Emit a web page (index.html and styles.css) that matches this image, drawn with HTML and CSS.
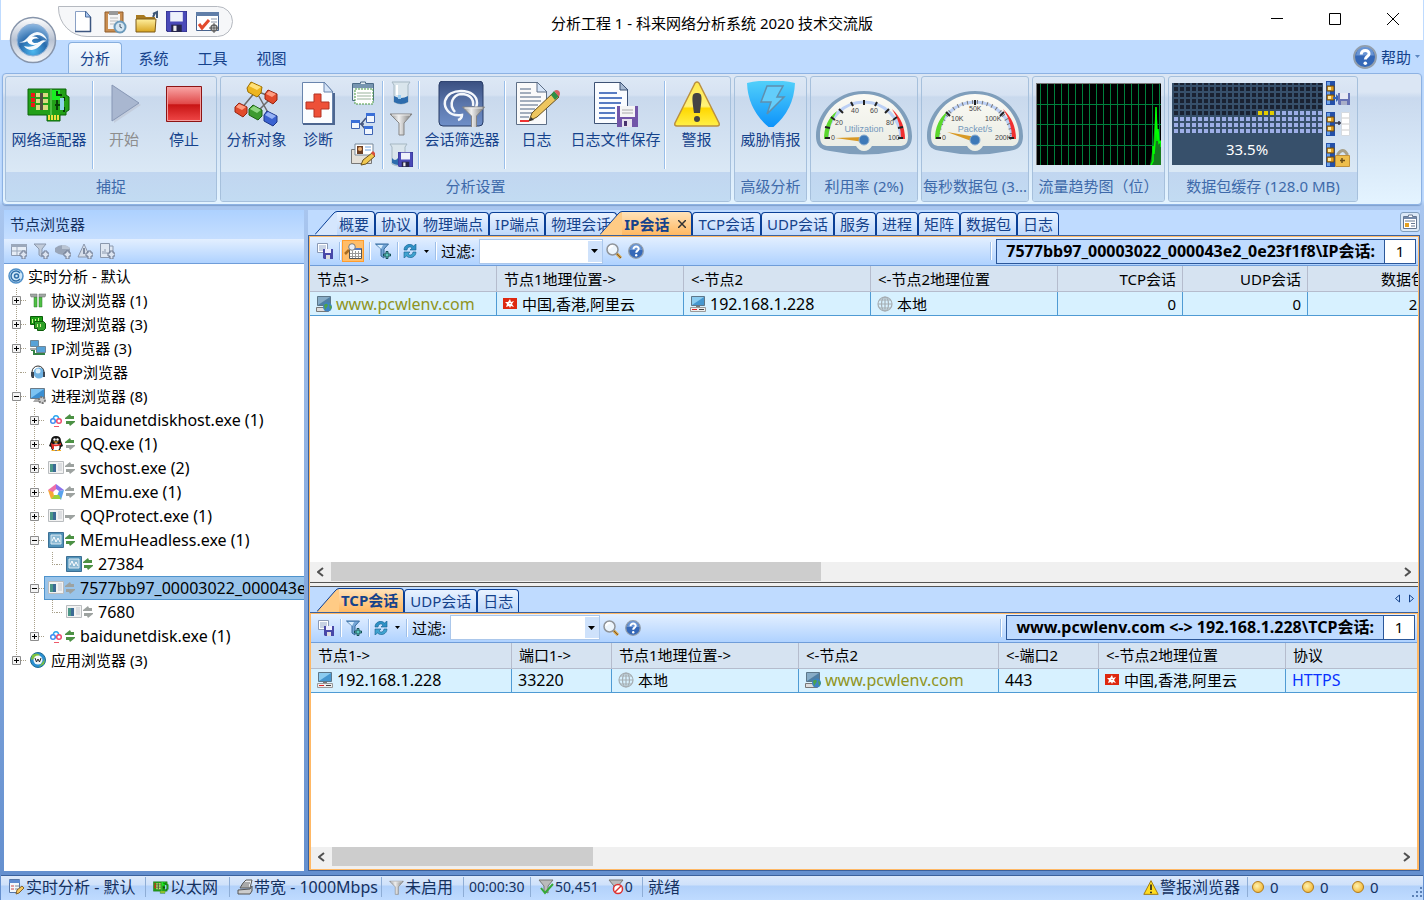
FILE: index.html
```html
<!DOCTYPE html>
<html lang="zh-CN">
<head>
    <meta charset="UTF-8">
    <meta name="viewport" content="width=device-width, initial-scale=1.0">
    <title>分析工程 1 - 科来网络分析系统 2020 技术交流版</title>
    <link rel="stylesheet" href="styles.css">
</head>
<body>
    <!-- shared icons -->
    <svg class="defs" width="0" height="0" aria-hidden="true">
        <defs>
            <linearGradient id="gOrb" x1="0" y1="0" x2="0" y2="1"><stop offset="0" stop-color="#fff"/><stop offset=".5" stop-color="#b9c3d3"/><stop offset="1" stop-color="#f4f7fb"/></linearGradient>
            <radialGradient id="gBlue" cx=".5" cy=".85" r=".85"><stop offset="0" stop-color="#4db8f0"/><stop offset=".5" stop-color="#2a6cad"/><stop offset="1" stop-color="#8fb9e2"/></radialGradient>
            <linearGradient id="gRed" x1="0" y1="0" x2="0" y2="1"><stop offset="0" stop-color="#f9a7a7"/><stop offset=".5" stop-color="#e04848"/><stop offset=".52" stop-color="#c81414"/><stop offset="1" stop-color="#f04848"/></linearGradient>
            <linearGradient id="gYellow" x1="0" y1="0" x2="0" y2="1"><stop offset="0" stop-color="#ffe94a"/><stop offset=".55" stop-color="#fff27a"/><stop offset=".6" stop-color="#ffd800"/><stop offset="1" stop-color="#fff04a"/></linearGradient>
            <linearGradient id="gShield" x1="0" y1="0" x2="0" y2="1"><stop offset="0" stop-color="#52d0fa"/><stop offset="1" stop-color="#0a90fa"/></linearGradient>
            <linearGradient id="gNavy" x1="0" y1="0" x2="0" y2="1"><stop offset="0" stop-color="#394f80"/><stop offset=".5" stop-color="#5a75aa"/><stop offset="1" stop-color="#6f8fc8"/></linearGradient>
            <linearGradient id="gMetal"><stop offset="0" stop-color="#8a8a8a"/><stop offset=".4" stop-color="#f0f0f0"/><stop offset="1" stop-color="#777"/></linearGradient>
            <linearGradient id="gFolder" x1="0" y1="0" x2="0" y2="1"><stop offset="0" stop-color="#fff0a0"/><stop offset="1" stop-color="#d9a520"/></linearGradient>
            <linearGradient id="gFace" x1="0" y1="0" x2="0" y2="1"><stop offset="0" stop-color="#fbfaf4"/><stop offset="1" stop-color="#e9ece4"/></linearGradient>

            <symbol id="floppy" viewBox="0 0 20 20"><path d="M0 0h20v20H2l-2-2z" fill="#4a4ab8" stroke="#2c2c80"/><path d="M4 1h12v9H4z" fill="#eef2fb"/><path d="M5 13h10v7H5z" fill="#26264c"/><path d="M7 14h3v5H7z" fill="#eee"/></symbol>
            <symbol id="floppy-soft" viewBox="0 0 12 12"><path d="M0 0h12v12H1l-1-1z" fill="#6672b4"/><path d="M2 0h8v6H2z" fill="#e6e9f4"/><path d="M3 8h6v4H3z" fill="#a9afc8"/></symbol>
            <symbol id="funnel" viewBox="0 0 24 24"><path d="M1 2h22l-8 9v12h-5V11z" fill="url(#gMetal)" stroke="#858585"/><path d="M3 3h18" stroke="#eee"/></symbol>
            <symbol id="chip" viewBox="0 0 44 34"><path d="M1 1h38v6l3 2v13l-3 2v3h-6v6H20v-6H1z" fill="#22a018" stroke="#0b6408"/><path d="M25 2h8v10h-8z" fill="#19ee22"/><path d="M4 5h4v4H4zM4 10h4v4H4zM4 15h4v4H4z" fill="#f01818"/><path d="M9 5h12v4H9zM9 11h12v4H9zM9 17h12v5H9z" fill="#d8dc80"/><path d="M13 5h3v17h-3z" fill="#505040"/><path d="M24 1v26" stroke="#7be070"/><path d="M30 3v4h5M28 17h8M30 12v10M37 9v4M37 19v5" stroke="#073f07" stroke-width="2" fill="none"/><path d="M33 10h4v12h-4z" fill="#8ed3e8"/><path d="M22 27v5M25 27v5M28 27v5M31 27v5" stroke="#f0e040" stroke-width="2"/></symbol>
            <symbol id="table-save" viewBox="0 0 16 16"><path d="M.5.5h10v9H.5z" fill="#fff" stroke="#8a99b5"/><path d="M2 3h7M2 5h7M2 7h4" stroke="#91a6c8"/><path d="M6 6h10v10H7l-1-1z" fill="#4848a8"/><path d="M8 6h6v4H8z" fill="#eef"/><path d="M9 12h4v4H9z" fill="#ddd"/></symbol>
            <symbol id="funnel-add" viewBox="0 0 16 16"><path d="M.5 1h13L9 6v9l-3-2V6z" fill="#75a5d5" stroke="#346b9e"/><path d="M2 2h6L6 6z" fill="#d8eeff"/><path d="M11 8.500h2v2.500h2.500v2H13v2.500h-2V13H8.500v-2H11z" fill="#5fc9c0" stroke="#154e55"/></symbol>
            <symbol id="refresh" viewBox="0 0 14 14"><path d="M1 6c0-5 6-7.500 9.500-4L13 0v6H7l2-2C7 2 4.500 3 4 6z" fill="#2f92c6" stroke="#16608d" stroke-width=".6"/><path d="M13 8c0 5-6 7.500-9.500 4L1 14V8h6l-2 2c2 2 4.500 1 5-2z" fill="#3fa3d0" stroke="#16608d" stroke-width=".6"/></symbol>
            <symbol id="search" viewBox="0 0 16 16"><path d="M10 10l5 5" stroke="#d5a040" stroke-width="3"/><path d="M10 10l5 5" stroke="#80592a"/><circle cx="6.500" cy="6.500" r="5.500" fill="#edf5fc" stroke="#909499" stroke-width="1.500"/><path d="M3 6a4 4 0 0 1 4-3" stroke="#fff" fill="none" stroke-width="2"/></symbol>
            <symbol id="help" viewBox="0 0 16 16"><circle cx="8" cy="8" r="7.300" fill="#3568b8" stroke="#929eac" stroke-width="1.300"/><path d="M2 7a6 6 0 0 1 12 0z" fill="#7fa7e0" opacity=".7"/><path d="M5.500 6.300C5.500 2.500 11 3 10.700 6 10.500 7.700 8.200 7.700 8.200 9.700" fill="none" stroke="#fff" stroke-width="2"/><circle cx="8.200" cy="12.200" r="1.200" fill="#fff"/></symbol>
            <symbol id="host" viewBox="0 0 16 16"><path d="M1.500.5h13v9h-13z" fill="#4697cf" stroke="#5d7789"/><path d="M2 1h12L2 9z" fill="#8bccf0"/><path d="M6 10h4v1H6z" fill="#777"/><path d="M.5 11.500h15v4H.5z" fill="#eee" stroke="#999"/><path d="M2 13.500h5" stroke="#d22"/><path d="M9 13.500h5" stroke="#444"/></symbol>
            <symbol id="host-web" viewBox="0 0 16 16"><path d="M1.500.5h13v9h-13z" fill="#4f7fa4" stroke="#5d7789"/><path d="M2 1h12L2 9z" fill="#87acc6"/><path d="M.5 11.500h12v4H.5z" fill="#ddd" stroke="#777"/><circle cx="11.500" cy="11" r="4.500" fill="#3d83c5"/><path d="M8 9c3-3 5 0 3 2s-1 3-2 3zM13 8l3 3-2 3z" fill="#4da34a"/></symbol>
            <symbol id="globe" viewBox="0 0 16 16"><g fill="none" stroke="#a5adb2" stroke-width="1.200"><circle cx="8" cy="8" r="7"/><ellipse cx="8" cy="8" rx="3.500" ry="7"/><path d="M1 8h14M2.500 4h11M2.500 12h11M8 1v14"/></g></symbol>
            <symbol id="flag" viewBox="0 0 14 11"><path d="M0 0h14v11H0z" fill="#de2910"/><path d="M7 1l1 3 3-1-2 3 2 3-3-1-1 2-1-2-3 1 1-3-2-2 3 0z" fill="#fff"/><path d="M7 5v1" stroke="#de2910"/></symbol>
            <symbol id="plus-box" viewBox="0 0 9 9"><path d="M.5.5h8v8h-8z" fill="#f4f4f4" stroke="#8c8c8c"/><path d="M2 4.500h5M4.500 2v5" stroke="#000"/></symbol>
            <symbol id="minus-box" viewBox="0 0 9 9"><path d="M.5.5h8v8h-8z" fill="#f4f4f4" stroke="#8c8c8c"/><path d="M2 4.500h5" stroke="#000"/></symbol>
            <symbol id="updown" viewBox="0 0 10 12"><path d="M0 5V4l5-4 1 2h3v3z"/><path d="M10 7v1l-5 4-1-2H1V7z"/></symbol>
            <symbol id="window" viewBox="0 0 16 14"><path d="M.5.5h15v12H.5z" fill="#f2f2f2" stroke="#b9bcbf"/><path d="M2 3h6v8H2z" fill="#4b9787"/><path d="M5 3h3v8H5z" fill="#3b6a94"/><path d="M10 3h4M10 5h4M10 7h4M10 9h4" stroke="#c6c9cf"/></symbol>
            <symbol id="memu-vm" viewBox="0 0 16 16"><path d="M.5.5h15v15H.5z" fill="#5192b9" stroke="#3b6f94"/><path d="M3 3h10v9H3z" fill="#8dbad4" stroke="#dceaf3"/><path d="M4 9l2-4 2 5 2-4 2 4" stroke="#fff" fill="none"/></symbol>
            <symbol id="baidu" viewBox="0 0 16 16"><path d="M5.500 7a2.600 2.600 0 1 1 5 0" fill="none" stroke="#2ba7ee" stroke-width="1.500"/><g fill="none" stroke-width="1.500"><circle cx="5" cy="9" r="2.300" stroke="#3f8cf0"/><circle cx="11" cy="9" r="2.300" stroke="#ee4c70"/></g><path d="M6 14.500h5" stroke="#ee5a6a"/></symbol>
            <symbol id="block-stack" viewBox="0 0 24 24"><path d="M0 0h9v24H0z" fill="#2450a8"/><path d="M1 1h3v22H1z" fill="#6da2e8"/><path d="M1 5h7v5H1zM1 14h7v5H1z" fill="#e4a020" stroke="#6c4b10"/><path d="M2 6h3v3H2zM2 15h3v3H2z" fill="#ffe9a0"/></symbol>
        </defs>
    </svg>

    <div class="app">
        <header class="titlebar">
            <button class="orb" aria-label="菜单">
                <svg width="48" height="48" viewBox="0 0 48 48"><circle cx="24" cy="24" r="22.500" fill="url(#gOrb)" stroke="#8795ab" stroke-width="1.500"/><circle cx="24" cy="24" r="16" fill="url(#gBlue)" stroke="#8fb0d6"/><path d="M10 26c7 1 9-9 18-10 5 0 9 4 10 8-3-3-6-5-10-5-8 1-8 10-18 7z" fill="#f4f9fd"/><path d="M38 25c-5 0-7 8-15 9-4 0-7-2-8-4 3 1 6 1 9 0 6-2 7-8 14-5z" fill="#f4f9fd"/><path d="M18 25c2-5 9-6 12-2-4-1-7 0-7 2 1 3 5 2 8 1-3 4-11 4-13-1z" fill="#fff"/></svg>
            </button>
            <div class="quick">
                <button aria-label="新建"><svg width="24" height="24" viewBox="0 0 24 24"><path d="M4.500 1.500h10l5 5v15h-15z" fill="#fff" stroke="#8aa0c4"/><path d="M14.500 1v6h5z" fill="#a9c6f0" stroke="#4d6d9c"/><path d="M4 21.500h16M19.500 7v15" stroke="#3d5680" stroke-width="1.500"/></svg></button>
                <button aria-label="粘贴"><svg width="24" height="24" viewBox="0 0 24 24"><path d="M2 2h18v20H2z" fill="#c98d50" stroke="#8f5c2b"/><path d="M5 4h12v15H5z" fill="#f6f6f6"/><path d="M6 1h9v4H6z" fill="#999"/><path d="M7 8h8M7 11h8M7 14h5" stroke="#bbb"/><circle cx="17" cy="17" r="5.500" fill="#d5e6f2" stroke="#6b9abb" stroke-width="2"/><path d="M17 14v3l2 1" stroke="#456" fill="none"/></svg></button>
                <button aria-label="打开"><svg width="24" height="24" viewBox="0 0 24 24"><path d="M1 5h8l2 2h9v15H1z" fill="#a87a22"/><path d="M1 9h20l-1 13H1z" fill="url(#gFolder)" stroke="#7c5a18"/><path d="M18 4l4-2v6M20 3l-2 4" stroke="#3f5878" stroke-width="2" fill="none"/></svg></button>
                <button aria-label="保存"><svg width="21" height="21"><use href="#floppy"/></svg></button>
                <button aria-label="选项"><svg width="26" height="24" viewBox="0 0 26 24"><path d="M1.500 2.500h22v18h-22z" fill="#fff" stroke="#46638f"/><path d="M1 2h23v4H1z" fill="#607ea8"/><path d="M4 14l3 4 7-8" stroke="#e34a2c" stroke-width="3" fill="none"/><path d="M16 9h6M16 12h6" stroke="#8b95a7"/><circle cx="19" cy="18" r="3" fill="#ddd" stroke="#666" stroke-width="1.500"/><path d="M19 13v10M14 18h10" stroke="#555"/></svg></button>
            </div>
            <h1>分析工程 1 - 科来网络分析系统 2020 技术交流版</h1>
            <div class="window-buttons">
                <button aria-label="最小化"><svg width="12" height="12"><path d="M0 5.500h12" stroke="#000"/></svg></button>
                <button aria-label="最大化"><svg width="12" height="12"><path d="M.5.5h11v11H.5z" fill="none" stroke="#000"/></svg></button>
                <button aria-label="关闭"><svg width="12" height="12"><path d="M0 0l12 12M12 0L0 12" stroke="#000"/></svg></button>
            </div>
        </header>

        <nav class="ribbon-tabs">
            <button class="active">分析</button>
            <button>系统</button>
            <button>工具</button>
            <button>视图</button>
            <button class="help-menu"><svg width="24" height="24"><use href="#help"/></svg>帮助<svg width="5" height="3"><path d="M0 0h5L2.500 3z" fill="#5b86c0"/></svg></button>
        </nav>

        <section class="ribbon">
            <div class="group first">
                <div class="group-body">
                    <button class="tool w86"><svg width="44" height="46" viewBox="0 -7 44 46"><use href="#chip" width="44" height="34"/></svg>网络适配器</button>
                    <i class="sep"></i>
                    <button class="tool w60" disabled><svg width="46" height="46" viewBox="0 0 46 46"><path d="M13 7l27 17-27 18z" fill="#c3cddd"/><path d="M11 4l27 18-27 18z" fill="#a9b7d0" stroke="#8797b5"/></svg>开始</button>
                    <button class="tool w60"><svg width="46" height="46" viewBox="0 0 46 46"><path d="M5.500 5.500h35v35h-35z" fill="url(#gRed)" stroke="#8d1414"/><path d="M6.500 6.500h33v33h-33z" fill="none" stroke="#f5a0a0"/></svg>停止</button>
                </div>
                <div class="caption">捕捉</div>
            </div>

            <div class="group settings">
                <div class="group-body">
                    <button class="tool w71"><svg width="46" height="46" viewBox="0 0 46 46"><path d="M22 10L7 28M22 10l16 6-16 16M22 10l15 27" stroke="#6b6b6b" stroke-width="1.500" fill="none"/><path d="M17 1l11 5-1 6-4 4-9-5-1-4z" fill="#edb51e" stroke="#9b6f00"/><path d="M18 2l9 4-4 3-8-4z" fill="#ffe17a"/><path d="M34 9l9 4v6l-4 4-8-5v-5z" fill="#e04a2c" stroke="#962410"/><path d="M35 10l7 3-4 3-6-3z" fill="#ff9c80"/><path d="M5 22l8 4v6l-4 4-8-5v-5z" fill="#e04a2c" stroke="#962410"/><path d="M5 23l7 3-4 3-6-3z" fill="#ff9c80"/><path d="M19 24l9 5v6l-4 4-9-5v-6z" fill="#3d9a30" stroke="#1d6114"/><path d="M20 25l7 4-4 3-7-4z" fill="#8ed682"/><path d="M33 30l10 5v6l-4 4-9-5v-6z" fill="#3a62d0" stroke="#1c3688"/><path d="M34 31l8 4-4 3-7-4z" fill="#96b2f6"/></svg>分析对象</button>
                    <button class="tool w52"><svg width="36" height="46" viewBox="0 0 36 46"><path d="M2.500 1.500h22l8 9v32h-30z" fill="#fbfdff" stroke="#6884ad"/><path d="M24 1v10h9z" fill="#d6e5f8" stroke="#6884ad"/><path d="M3 43h31V12" stroke="#4d6690" stroke-width="2" fill="none"/><path d="M14 13h7v8h8v7h-8v8h-7v-8H6v-7h8z" fill="#ee5038" stroke="#b33322"/></svg>诊断</button>
                    <div class="stack w38">
                        <button aria-label="视图配置"><svg width="24" height="24" viewBox="0 0 24 24"><path d="M1.500 2.500h8V1h5v1.500h8v17h-21z" fill="#e8f0f4" stroke="#4c6b88"/><path d="M2 3h20v4H2z" fill="#7795b0"/><path d="M4 8h18v15H4z" fill="#fff" stroke="#4a9a3f" stroke-dasharray="2 1"/><path d="M6 12h14M6 15h14M6 18h14" stroke="#99b39c"/></svg></button>
                        <button aria-label="节点组"><svg width="24" height="24" viewBox="0 0 24 24"><path d="M8 12h5M10 12l5-6M10 12l5 6" stroke="#44557d" stroke-width="1.500"/><g fill="#f1f6fd" stroke="#3f64b2"><path d="M.5 8.500h8v8h-8zM15.500 1.500h8v9h-8zM13.500 14.500h8v8h-8z"/></g><path d="M0 8h9v3H0zM15 1h9v3h-9zM13 14h9v3h-9z" fill="#3b70d8"/></svg></button>
                        <button aria-label="名字表"><svg width="24" height="24" viewBox="0 0 24 24"><path d="M.5 6.500h20v14H.5z" fill="#e4e0d8" stroke="#777"/><path d="M4 1h18v11H4z" fill="#fff" stroke="#789"/><path d="M6 3h6v8H6z" fill="#6b3f24"/><circle cx="9" cy="6" r="2" fill="#f0b070"/><path d="M14 4h6M14 7h6" stroke="#6fa2dd"/><path d="M10 22l2-5 9-7 3 3-9 8z" fill="#f0c850" stroke="#6c531c"/><path d="M20 10l2-2 3 3-2 2z" fill="#d8503c"/></svg></button>
                    </div>
                    <i class="sep"></i>
                    <div class="stack w34">
                        <button aria-label="数据包缓存"><svg width="24" height="24" viewBox="0 0 24 24"><path d="M3 1h18l-2 3v17q-7 4-14 0V4z" fill="#d9e5ec" stroke="#a5b7c2"/><path d="M5 15q7 4 14 0v6q-7 4-14 0z" fill="#2d6cad"/><path d="M9 14h3v4H9z" fill="#9ccdf0"/><path d="M8 4v10" stroke="#fff" stroke-width="2"/></svg></button>
                        <button aria-label="过滤器"><svg width="24" height="24"><use href="#funnel"/></svg></button>
                        <button aria-label="缓存保存"><svg width="24" height="24" viewBox="0 0 24 24"><path d="M1 1h17l-2 3v17q-6 4-13 0V4z" fill="#d9e5ec" stroke="#a5b7c2"/><path d="M3 15q3 4 6 0v7q-3 0-6-2z" fill="#2d6cad"/><use href="#floppy" x="9" y="9" width="15" height="15"/></svg></button>
                    </div>
                    <i class="sep"></i>
                    <button class="tool w84"><svg width="48" height="46" viewBox="0 0 48 46"><rect x="1" y="0" width="44" height="45" rx="4" fill="url(#gNavy)" stroke="#293d67"/><path d="M20 39c3-1 4-3 4-5C10 36 6 26 7 20c2-7 9-10 16-10 10 0 16 5 16 12 0 3-1 5-3 7M17 31c-7-8-2-17 6-18 9 0 13 5 12 12" fill="none" stroke="#f4f7fc" stroke-width="2.500"/><use href="#funnel" x="22" y="24" width="27" height="24"/></svg>会话筛选器</button>
                    <i class="sep"></i>
                    <button class="tool w61"><svg width="46" height="46" viewBox="0 0 46 46"><path d="M2.500 1.500h21l9 9v33h-30z" fill="#fafafa" stroke="#5e6f86"/><path d="M23 1v10h10z" fill="#d6e5f8" stroke="#5e6f86"/><path d="M6 8h11M6 12h11M6 16h21M6 20h21M6 24h18M6 28h15M6 32h12M6 36h9" stroke="#a3aebd" stroke-width="2"/><path d="M6 40h9" stroke="#e33" stroke-width="2"/><path d="M15 40l3-8 22-21 5 5-22 20z" fill="#eec65f" stroke="#665020"/><path d="M37 14l3-4 5 5-4 4z" fill="#2f8f46"/><path d="M40 10l2-1q4 0 4 4l-1 3z" fill="#d86060"/><path d="M15 40l2-4 3 3z" fill="#333"/></svg>日志</button>
                    <button class="tool w96"><svg width="46" height="46" viewBox="0 0 46 46"><path d="M1.500 1.500h26l7 7v34h-33z" fill="#fafcff" stroke="#3d5275"/><path d="M27 1v8h8z" fill="#a8bad2" stroke="#3d5275"/><path d="M6 12h18M6 17h23M6 22h22M6 27h16M6 32h16M6 37h16" stroke="#2352b0" stroke-width="1.500"/><path d="M24 25h21v21H24z" fill="#7255a8"/><path d="M27 25h15v11H27z" fill="#f5f5f5"/><path d="M29 29h11M29 32h11" stroke="#aaa"/><path d="M29 38h10v8H29z" fill="#e6e2ee"/><path d="M31 40h3v5h-3z" fill="#49326e"/></svg>日志文件保存</button>
                    <i class="sep"></i>
                    <button class="tool w61"><svg width="46" height="46" viewBox="0 0 46 46"><path d="M23 1q2 0 3 3l19 38q1 3-2 3H3q-3 0-2-3L20 4q1-3 3-3z" fill="url(#gYellow)" stroke="#bb9140" stroke-width="1.500"/><path d="M23 12c6 0 5 5 3 20h-6c-2-15-3-20 3-20z" fill="#444"/><circle cx="23" cy="38" r="3" fill="#444"/></svg>警报</button>
                </div>
                <div class="caption">分析设置</div>
            </div>

            <div class="group">
                <div class="group-body">
                    <button class="tool w71"><svg width="48" height="46" viewBox="0 0 48 46"><path d="M0 2q12-3 24-2 12-1 24 2-1 28-24 46Q1 30 0 2z" fill="url(#gShield)"/><path d="M20 5h16l-6 11h7L20 33l4-12h-10z" fill="#63cdfb" stroke="#5f8fae" stroke-width="1.500"/></svg>威胁情报</button>
                </div>
                <div class="caption">高级分析</div>
            </div>

            <div class="group gauge">
                <div class="group-body">
                    <svg width="98" height="66" viewBox="0 0 98 66">
                        <path d="M49 1C19 1 1 25 1 46c0 12 7 14 14 15q34 7 68 0c7-1 14-3 14-15C97 25 79 1 49 1z" fill="#7f9ebb"/>
                        <path d="M49 4C22 4 5 26 5 46c0 8 3 10 9 10h27q3 5 8 5t8-5h27c6 0 9-2 9-10C93 26 76 4 49 4z" fill="url(#gFace)"/>
                        <path d="M12 49a37 37 0 0 1 74 0" fill="none" stroke="#bcd0f5" stroke-width="3"/>
                        <path d="M9 49q0-18 13-28-8 14-9 28z" fill="#5bd82c"/><path d="M77 19q13 12 13 30h-4q0-17-9-30z" fill="#f03030"/>
                        <path d="M49 10v5M36 12l2 4M62 12l-2 4M24 19l4 4M74 19l-4 4M16 27l4 3M82 27l-4 3M10 37l5 1M88 37l-5 1M10 48h5M88 48h-5" stroke="#222" stroke-width="2"/>
                        <g class="dial"><text x="16" y="50">0</text><text x="20" y="35">20</text><text x="36" y="23">40</text><text x="55" y="23">60</text><text x="71" y="35">80</text><text x="73" y="50">100</text></g>
                        <text class="dial-name" x="49" y="42">Utilization</text>
                        <path d="M20 48l29-1v5z" fill="#d99a25"/><circle cx="49" cy="50" r="5" fill="#3d79b8" stroke="#8caed0"/>
                    </svg>
                </div>
                <div class="caption">利用率 (2%)</div>
            </div>

            <div class="group gauge">
                <div class="group-body">
                    <svg width="98" height="66" viewBox="0 0 98 66">
                        <path d="M49 1C19 1 1 25 1 46c0 12 7 14 14 15q34 7 68 0c7-1 14-3 14-15C97 25 79 1 49 1z" fill="#7f9ebb"/>
                        <path d="M49 4C22 4 5 26 5 46c0 8 3 10 9 10h27q3 5 8 5t8-5h27c6 0 9-2 9-10C93 26 76 4 49 4z" fill="url(#gFace)"/>
                        <path d="M12 49a37 37 0 0 1 74 0" fill="none" stroke="#bcd0f5" stroke-width="3"/>
                        <path d="M12 49a37 37 0 0 1 74 0" fill="none" stroke="#777" stroke-width="4" stroke-dasharray="1 4"/>
                        <path d="M9 49q0-18 13-28-8 14-9 28z" fill="#5bd82c"/><path d="M77 19q13 12 13 30h-4q0-17-9-30z" fill="#f03030"/>
                        <path d="M49 10v5M20 22l4 4M78 22l-4 4M10 48h5M88 48h-5" stroke="#222" stroke-width="2"/>
                        <g class="dial"><text x="16" y="50">0</text><text x="25" y="31">10K</text><text x="43" y="21">50K</text><text x="59" y="31">100K</text><text x="69" y="50">200K</text></g>
                        <text class="dial-name" x="49" y="42">Packet/s</text>
                        <path d="M21 42l29 5-2 5z" fill="#d99a25"/><circle cx="49" cy="50" r="5" fill="#3d79b8" stroke="#8caed0"/>
                    </svg>
                </div>
                <div class="caption">每秒数据包 (3...</div>
            </div>

            <div class="group trend">
                <div class="group-body">
                    <svg width="125" height="82" viewBox="0 0 125 82">
                        <defs><pattern id="grid" width="7" height="82" patternUnits="userSpaceOnUse"><path d="M4.500 0v82" stroke="#00803c"/></pattern></defs>
                        <path d="M0 0h125v82H0z" fill="#000"/><path d="M0 0h125v82H0z" fill="url(#grid)"/>
                        <path d="M0 21.500h125M0 41.500h125M0 62.500h125" stroke="#00803c"/>
                        <path d="M114 82l3-20 3-38 2 24 1 10 2 2v22z" fill="#187a20"/>
                        <path d="M115 82l2-4v-15l1 8 1-12 1-35 1 34 1-12 1 14 2-2v6" fill="none" stroke="#00ff00" stroke-width="1.500"/>
                        <path d="M0 .5h125M.5 0v82" stroke="#777"/>
                    </svg>
                </div>
                <div class="caption">流量趋势图（位）</div>
            </div>

            <div class="group buffer">
                <div class="group-body">
                    <svg class="buffer-map" width="151" height="82" viewBox="0 0 151 82">
                        <defs>
                            <pattern id="free" width="6" height="6" patternUnits="userSpaceOnUse" x="2" y="4"><path d="M0 0h4v4H0z" fill="#1a2232"/></pattern>
                            <pattern id="used" width="6" height="6" patternUnits="userSpaceOnUse" x="2" y="4"><path d="M0 0h4v4H0z" fill="#9daee6"/></pattern>
                        </defs>
                        <path d="M0 0h151v82H0z" fill="#37506b"/><path d="M2 0h149v26H2zM2 28h84v4H2z" fill="url(#free)"/><path d="M86 28h65v4H86zM2 34h149v18H2z" fill="url(#used)"/>
                        <path d="M86 28h4v4h-4zM92 28h4v4h-4zM98 28h4v4h-4z" fill="#e4cc00"/>
                        <text x="75" y="72">33.5%</text>
                    </svg>
                    <div class="stack w24">
                        <button aria-label="导出缓存"><svg width="24" height="24" viewBox="0 0 24 24"><use href="#block-stack"/><path d="M7 16h3v-3l4 4-4 4v-3H7z" fill="#3565bb"/><use href="#floppy-soft" x="12" y="12" width="12" height="12"/></svg></button>
                        <button aria-label="清空缓存"><svg width="24" height="24" viewBox="0 0 24 24"><use href="#block-stack"/><path d="M9 11h6M13 9v4" stroke="#334" stroke-width="1.500"/><path d="M15.500.5h8v23h-8z" fill="#fff" stroke="#d5dae0"/><path d="M16 6h7M16 12h7M16 18h7" stroke="#ccc"/></svg></button>
                        <button aria-label="锁定缓存"><svg width="24" height="24" viewBox="0 0 24 24"><use href="#block-stack"/><path d="M12 13v-2q5-7 9 0v2" fill="none" stroke="#a8a088" stroke-width="3"/><path d="M9.500 12.500h14v11h-14z" fill="#eebe4c" stroke="#c0903a"/><path d="M16 15v5M14 17.500h5" stroke="#6e5018" stroke-width="1.500"/></svg></button>
                    </div>
                </div>
                <div class="caption">数据包缓存 (128.0 MB)</div>
            </div>
        </section>

        <main>
            <aside class="explorer">
                <h2>节点浏览器</h2>
                <div class="explorer-tools">
                    <button aria-label="添加图表" disabled><svg width="16" height="16" viewBox="0 0 16 16"><path d="M.5 1.500h15v11H.5z" fill="#e6edf6" stroke="#8e9bb0"/><path d="M0 1h16v3H0z" fill="#9ba8bb"/><path d="M1 8h14M6 4v8" stroke="#9ba8bb"/><path d="M11 8h3v2h2v3h-2v3h-3v-3H9v-3h2z" fill="#dce4f0" stroke="#6e7b92"/></svg></button>
                    <button aria-label="添加过滤器" disabled><svg width="16" height="16" viewBox="0 0 16 16"><path d="M1 1h12L9 6v8l-3-2V6z" fill="#c1cbd9" stroke="#8b98ad"/><path d="M11 8h3v2h2v3h-2v3h-3v-3H9v-3h2z" fill="#dce4f0" stroke="#6e7b92"/></svg></button>
                    <button aria-label="统计" disabled><svg width="16" height="16" viewBox="0 0 16 16"><path d="M0 5q7-6 15 0v4q-7 6-15 0z" fill="#99a5b8"/><path d="M7 6V2q7 0 8 4z" fill="#bac5d4"/><path d="M11 8h3v2h2v3h-2v3h-3v-3H9v-3h2z" fill="#dce4f0" stroke="#6e7b92"/></svg></button>
                    <button aria-label="添加警报" disabled><svg width="16" height="16" viewBox="0 0 16 16"><path d="M7 1l6 13H1z" fill="#d6deea" stroke="#8b98ad"/><path d="M7 5v6" stroke="#7f8ba0" stroke-width="2"/><path d="M11 8h3v2h2v3h-2v3h-3v-3H9v-3h2z" fill="#dce4f0" stroke="#6e7b92"/></svg></button>
                    <button aria-label="添加报表" disabled><svg width="16" height="16" viewBox="0 0 16 16"><path d="M1.500.5h9v14h-9zM10 3h4v9h-4" fill="#dfe7f2" stroke="#8b98ad"/><path d="M4 11V8M6 11V6M8 11V9" stroke="#8b98ad"/><path d="M11 8h3v2h2v3h-2v3h-3v-3H9v-3h2z" fill="#dce4f0" stroke="#6e7b92"/></svg></button>
                </div>
                <div class="tree">
                    <div class="row root"><svg width="16" height="16" viewBox="0 0 16 16"><circle cx="8" cy="8" r="7" fill="#cfe6f8" stroke="#4f8fc8" stroke-width="1.500"/><path d="M12 5a5 5 0 1 0 0 6" stroke="#2f6ea8" stroke-width="1.500" fill="none"/><circle cx="8.500" cy="8" r="2" fill="none" stroke="#2f6ea8" stroke-width="1.500"/></svg>实时分析 - 默认</div>
                    <ul>
                        <li><div class="row"><svg width="9" height="9"><use href="#plus-box"/></svg><i></i><a href="#"><svg width="16" height="16" viewBox="0 0 16 16"><path d="M4 5h3v10H4zM9 5h3v10H9z" fill="#4fc044" stroke="#2f7a2c" stroke-width=".5"/><path d="M0 2l7 0v3H1zM9 2h7l-1 3H9z" fill="#a3a8a5" stroke="#666f68" stroke-width=".5"/></svg>协议浏览器 (1)</a></div></li>
                        <li><div class="row"><svg width="9" height="9"><use href="#plus-box"/></svg><i></i><a href="#"><svg width="16" height="16"><path d="M.5.5h12v8H.5z" fill="#1d9f18" stroke="#0b5c08"/><path d="M4.500 5.500h9l2 2v5l-2 2h-6v-2h-3z" fill="#2fa028" stroke="#0b5c08"/><path d="M2.500 3v4M5.500 3v2M8.500 2v3M7.500 8v3M10.500 8v3" stroke="#d2f090"/></svg>物理浏览器 (3)</a></div></li>
                        <li><div class="row"><svg width="9" height="9"><use href="#plus-box"/></svg><i></i><a href="#"><svg width="16" height="16" viewBox="0 0 16 16"><path d="M.5.5h8v6h-8zM6.500 6.500h9v6h-9z" fill="#58a2d8" stroke="#6f8798"/><path d="M1 10h3v4h11" stroke="#348244" fill="none" stroke-width="2"/><path d="M0 8h6v2H0z" fill="#aaa"/></svg>IP浏览器 (3)</a></div></li>
                        <li><div class="row"><b></b><i></i><a href="#"><svg width="16" height="16" viewBox="0 0 16 16"><circle cx="9" cy="9" r="5.500" fill="#70b2e2"/><circle cx="8" cy="7" r="2.500" fill="#dceffa"/><path d="M2 10V8a6 6 0 0 1 12 0v2" stroke="#333" fill="none"/><path d="M1 8h3v6H2l-1-2zM13 8h2v5h-2z" fill="#3c4652"/></svg>VoIP浏览器</a></div></li>
                        <li><div class="row"><svg width="9" height="9"><use href="#minus-box"/></svg><i></i><a href="#"><svg width="16" height="16" viewBox="0 0 16 16"><path d="M.5.5h14v10H.5z" fill="#3b8fd2" stroke="#6b7b88"/><path d="M1 1h13L1 10z" fill="#7cc3f2"/><path d="M3 14h7v-3H5z" fill="#aaa"/><circle cx="12" cy="12" r="3" fill="#ccc" stroke="#777" stroke-width="2" stroke-dasharray="2 1"/></svg>进程浏览器 (8)</a></div>
                            <ul class="latin">
                                <li><div class="row"><svg width="9" height="9"><use href="#plus-box"/></svg><i></i><a href="#"><svg width="16" height="16"><use href="#baidu"/></svg><svg class="traffic on" width="10" height="12"><use href="#updown"/></svg>baidunetdiskhost.exe (1)</a></div></li>
                                <li><div class="row"><svg width="9" height="9"><use href="#plus-box"/></svg><i></i><a href="#"><svg width="16" height="16" viewBox="0 0 16 16"><path d="M8 0q5 0 5 5l2 5-2 1q0 4-5 4t-5-4l-2-1 2-5q0-5 5-5z" fill="#151515"/><circle cx="8" cy="11" r="3.500" fill="#fff"/><circle cx="6.500" cy="3.500" r="1.200" fill="#fff"/><circle cx="9.500" cy="3.500" r="1.200" fill="#fff"/><path d="M5 5.500h6l-3 1.500zM3 15h4v-1H4zM9 14h4v1H9z" fill="#f5ad22"/><path d="M3 7q5 3 10 0v2q-5 2-7 1v3H4z" fill="#df2b26"/></svg><svg class="traffic" width="10" height="12" viewBox="0 0 10 12"><path class="sent" d="M0 5V4l5-4 1 2h3v3z"/><path d="M10 7v1l-5 4-1-2H1V7z"/></svg>QQ.exe (1)</a></div></li>
                                <li><div class="row"><svg width="9" height="9"><use href="#plus-box"/></svg><i></i><a href="#"><svg width="16" height="14"><use href="#window"/></svg><svg class="traffic" width="10" height="12"><use href="#updown"/></svg>svchost.exe (2)</a></div></li>
                                <li><div class="row"><svg width="9" height="9"><use href="#plus-box"/></svg><i></i><a href="#"><svg width="16" height="16" viewBox="0 0 16 16"><path d="M8 0l8 6-5 1-3-2-3 2z" fill="#8a72ee"/><path d="M16 6l-3 10-4-4 2-5z" fill="#5aa3ee"/><path d="M13 15H3l3-4h5z" fill="#9bd23c"/><path d="M3 15L0 6l5 1 1 5z" fill="#f8a834"/><path d="M0 6l8-6v5L5 8z" fill="#ee6fa8"/></svg><svg class="traffic" width="10" height="12"><use href="#updown"/></svg>MEmu.exe (1)</a></div></li>
                                <li><div class="row"><svg width="9" height="9"><use href="#plus-box"/></svg><i></i><a href="#"><svg width="16" height="14"><use href="#window"/></svg><svg class="traffic" width="10" height="12"><path d="M0 5h10v1l-5 4-1-2H0z"/></svg>QQProtect.exe (1)</a></div></li>
                                <li><div class="row"><svg width="9" height="9"><use href="#minus-box"/></svg><i></i><a href="#"><svg width="16" height="16"><use href="#memu-vm"/></svg><svg class="traffic on" width="10" height="12"><use href="#updown"/></svg>MEmuHeadless.exe (1)</a></div>
                                    <ul><li><div class="row"><b></b><i></i><a href="#"><svg width="16" height="16"><use href="#memu-vm"/></svg><svg class="traffic on" width="10" height="12"><use href="#updown"/></svg>27384</a></div></li></ul>
                                </li>
                                <li><div class="row selected"><svg width="9" height="9"><use href="#minus-box"/></svg><i></i><a href="#"><svg width="16" height="14"><use href="#window"/></svg><svg class="traffic" width="10" height="12"><use href="#updown"/></svg><span>7577bb97_00003022_000043e2_0e23f1f8</span></a></div>
                                    <ul><li><div class="row"><b></b><i></i><a href="#"><svg width="16" height="14"><use href="#window"/></svg><svg class="traffic" width="10" height="12"><use href="#updown"/></svg>7680</a></div></li></ul>
                                </li>
                                <li><div class="row"><svg width="9" height="9"><use href="#plus-box"/></svg><i></i><a href="#"><svg width="16" height="16"><use href="#baidu"/></svg><svg class="traffic on" width="10" height="12"><use href="#updown"/></svg>baidunetdisk.exe (1)</a></div></li>
                            </ul>
                        </li>
                        <li><div class="row"><svg width="9" height="9"><use href="#plus-box"/></svg><i></i><a href="#"><svg width="16" height="16" viewBox="0 0 16 16"><circle cx="8" cy="8" r="7.500" fill="#2a8fd0" stroke="#1d6c96"/><path d="M2 3q5-3 8 0l-3 3-6 2zM9 15l5-3 1-5z" fill="#7bc23c"/><circle cx="8" cy="8" r="4.500" fill="#f3f8fb"/><path d="M5 6l1.500 4L8 7l1.500 3L11 6" stroke="#222" fill="none"/></svg>应用浏览器 (3)</a></div></li>
                    </ul>
                </div>
            </aside>

            <section class="workspace">
                <div class="tabs">
                    <button class="tab slant"><svg width="22" height="24"><path d="M0 23.500L18 3q2-2.500 4-2.500V24H0z" fill="#d5e6fd"/><path d="M0 23.500L18 3q2-2.500 4-2.500" fill="none" stroke="#0a3f96"/></svg><span>概要</span></button>
                    <button class="tab">协议</button>
                    <button class="tab">物理端点</button>
                    <button class="tab">IP端点</button>
                    <button class="tab">物理会话</button>
                    <button class="tab slant active over"><svg width="22" height="24"><path d="M0 23.500L18 3q2-2.500 4-2.500V24H0z" fill="#ffcb85"/><path d="M0 23.500L18 3q2-2.500 4-2.500" fill="none" stroke="#0a3f96"/></svg><span>IP会话<svg width="8" height="8"><path d="M0 0l8 8M8 0L0 8" stroke="#333" stroke-width="1.500"/></svg></span></button>
                    <button class="tab">TCP会话</button>
                    <button class="tab">UDP会话</button>
                    <button class="tab">服务</button>
                    <button class="tab">进程</button>
                    <button class="tab">矩阵</button>
                    <button class="tab">数据包</button>
                    <button class="tab">日志</button>
                    <button class="panel-options" aria-label="视图选项"><svg width="16" height="16" viewBox="0 0 16 16"><path d="M1.500 2.500h5V1h4v1.500h4v12h-13z" fill="#fff" stroke="#667892"/><path d="M2 3h12v2H2z" fill="#7389a8"/><path d="M3 9h4v4H3z" fill="#e4a020"/><path d="M3 7h10M9 9.500h4M9 12h4" stroke="#667892"/></svg></button>
                </div>

                <div class="frame">
                    <section class="pane">
                        <div class="toolbar">
                            <button aria-label="导出"><svg width="16" height="16"><use href="#table-save"/></svg></button>
                            <i></i>
                            <button class="pressed" aria-label="显示详细"><svg width="18" height="16" viewBox="0 0 18 16"><path d="M5.500 5.500h12v10h-12z" fill="#fff" stroke="#555"/><path d="M5 5h12v2H5z" fill="#5378c0"/><path d="M8.500 8v7M11.500 8v7M14.500 8v7M6 10.500h11M6 13.500h11" stroke="#999"/><circle cx="8" cy="4" r="3.300" fill="#e8eef8" stroke="#777"/><path d="M5 7l-4 4" stroke="#a86b20" stroke-width="2.500"/></svg></button>
                            <i></i>
                            <button aria-label="添加过滤器"><svg width="16" height="16"><use href="#funnel-add"/></svg></button>
                            <i></i>
                            <button class="drop" aria-label="刷新"><svg width="14" height="14"><use href="#refresh"/></svg><svg width="5" height="3"><path d="M0 0h5L2.500 3z"/></svg></button>
                            <i></i>
                            <label for="filter-ip">过滤:</label>
                            <div class="combo"><input type="text" id="filter-ip"><button aria-label="过滤历史"><svg width="7" height="4"><path d="M0 0h7L3.500 4z"/></svg></button></div>
                            <button aria-label="搜索"><svg width="16" height="16"><use href="#search"/></svg></button>
                            <button aria-label="帮助"><svg width="16" height="16"><use href="#help"/></svg></button>
                            <i class="push"></i>
                            <div class="count"><strong>7577bb97_00003022_000043e2_0e23f1f8\IP会话:</strong><span>1</span></div>
                        </div>
                        <div class="list">
                            <table>
                                <colgroup><col class="c187"><col class="c187"><col class="c187"><col class="c187"><col class="c125"><col class="c125"><col class="c125"></colgroup>
                                <thead><tr><th>节点1-&gt;</th><th>节点1地理位置-&gt;</th><th>&lt;-节点2</th><th>&lt;-节点2地理位置</th><th class="num">TCP会话</th><th class="num">UDP会话</th><th class="num">数据包</th></tr></thead>
                                <tbody><tr><td class="site latin"><svg width="16" height="16"><use href="#host-web"/></svg>www.pcwlenv.com</td><td><svg class="flag" width="14" height="11"><use href="#flag"/></svg>中国,香港,阿里云</td><td class="latin"><svg width="16" height="16"><use href="#host"/></svg>192.168.1.228</td><td><svg width="16" height="16"><use href="#globe"/></svg>本地</td><td class="num">0</td><td class="num">0</td><td class="num">20</td></tr></tbody>
                            </table>
                        </div>
                        <div class="scroll"><button aria-label="向左"><svg width="7" height="10"><path d="M6 1L1 5l5 4" fill="none" stroke="#505050" stroke-width="2"/></svg></button><div class="track"><div class="thumb" style="width: 46%"></div></div><button aria-label="向右"><svg width="7" height="10"><path d="M1 1l5 4-5 4" fill="none" stroke="#505050" stroke-width="2"/></svg></button></div>
                    </section>

                    <div class="splitter"></div>

                    <section class="pane lower">
                        <div class="tabs">
                            <button class="tab slant active"><svg width="22" height="24"><path d="M0 23.500L18 3q2-2.500 4-2.500V24H0z" fill="#ffcb85"/><path d="M0 23.500L18 3q2-2.500 4-2.500" fill="none" stroke="#0a3f96"/></svg><span>TCP会话</span></button>
                            <button class="tab">UDP会话</button>
                            <button class="tab">日志</button>
                            <span class="tab-scroll"><svg width="19" height="9"><path d="M4.500 1v7L.5 4.500zM14.500 1v7l4-3.500z" fill="none" stroke="#15428b"/></svg></span>
                        </div>
                        <div class="inner">
                            <div class="toolbar">
                                <button aria-label="导出"><svg width="16" height="16"><use href="#table-save"/></svg></button>
                                <i></i>
                                <button aria-label="添加过滤器"><svg width="16" height="16"><use href="#funnel-add"/></svg></button>
                                <i></i>
                                <button class="drop" aria-label="刷新"><svg width="14" height="14"><use href="#refresh"/></svg><svg width="5" height="3"><path d="M0 0h5L2.500 3z"/></svg></button>
                                <i></i>
                                <label for="filter-tcp">过滤:</label>
                                <div class="combo wide"><input type="text" id="filter-tcp"><button aria-label="过滤历史"><svg width="7" height="4"><path d="M0 0h7L3.500 4z"/></svg></button></div>
                                <button aria-label="搜索"><svg width="16" height="16"><use href="#search"/></svg></button>
                                <button aria-label="帮助"><svg width="16" height="16"><use href="#help"/></svg></button>
                                <i class="push"></i>
                                <div class="count"><strong>www.pcwlenv.com &lt;-&gt; 192.168.1.228\TCP会话:</strong><span>1</span></div>
                            </div>
                            <div class="list">
                                <table>
                                    <colgroup><col class="c201"><col class="c100"><col class="c187"><col class="c200"><col class="c100"><col class="c187"><col class="c187"></colgroup>
                                    <thead><tr><th>节点1-&gt;</th><th>端口1-&gt;</th><th>节点1地理位置-&gt;</th><th>&lt;-节点2</th><th>&lt;-端口2</th><th>&lt;-节点2地理位置</th><th>协议</th></tr></thead>
                                    <tbody><tr><td class="latin"><svg width="16" height="16"><use href="#host"/></svg>192.168.1.228</td><td class="latin">33220</td><td><svg width="16" height="16"><use href="#globe"/></svg>本地</td><td class="site latin"><svg width="16" height="16"><use href="#host-web"/></svg>www.pcwlenv.com</td><td class="latin">443</td><td><svg class="flag" width="14" height="11"><use href="#flag"/></svg>中国,香港,阿里云</td><td class="https latin">HTTPS</td></tr></tbody>
                                </table>
                            </div>
                            <div class="scroll"><button aria-label="向左"><svg width="7" height="10"><path d="M6 1L1 5l5 4" fill="none" stroke="#505050" stroke-width="2"/></svg></button><div class="track"><div class="thumb" style="width: 24.5%"></div></div><button aria-label="向右"><svg width="7" height="10"><path d="M1 1l5 4-5 4" fill="none" stroke="#505050" stroke-width="2"/></svg></button></div>
                        </div>
                    </section>
                </div>
            </section>
        </main>

        <footer>
            <span class="w137"><svg width="17" height="16" viewBox="0 0 17 16"><path d="M1.500.5h10v13h-10z" fill="#f3f7fc" stroke="#5878a8"/><path d="M1 1h11v3H1z" fill="#5c8ad0"/><path d="M3 7h3M3 10h3" stroke="#c44"/><path d="M7 7h4M7 10h3" stroke="#789"/><path d="M8 15l1-4 5-4 2 2-5 5z" fill="#f4c860" stroke="#81602c"/></svg>实时分析 - 默认</span>
            <span class="w84"><svg width="16" height="13"><use href="#chip"/></svg>以太网</span>
            <span class="w152"><svg width="16" height="16" viewBox="0 0 16 16"><path d="M6 4l3-3h6l-2 8H3z" fill="#eee" stroke="#555"/><path d="M6 4h7M5 6h7M4 8h8" stroke="#666"/><path d="M1 11l12-1 2-3v5l-2 3H1z" fill="#ccc" stroke="#555"/></svg>带宽 - 1000Mbps</span>
            <span class="w82"><svg width="15" height="15"><use href="#funnel"/></svg>未启用</span>
            <span class="w67 digits">00:00:30</span>
            <span class="w112 digits"><svg width="16" height="16" viewBox="0 0 16 16"><path d="M1 1h14l-5 6v7l-4-2V7z" fill="#bbb" stroke="#777"/><path d="M3 9l4 5 8-9" stroke="#35a935" stroke-width="2" fill="none"/></svg>50,451<svg class="drops" width="16" height="16" viewBox="0 0 16 16"><path d="M1 1h14l-5 6v7l-4-2V7z" fill="#bbb" stroke="#777"/><circle cx="10" cy="10" r="4.500" fill="#fff" stroke="#d33" stroke-width="1.500"/><path d="M7 13l6-6" stroke="#d33" stroke-width="1.500"/></svg>0</span>
            <span class="fill">就绪</span>
            <span class="alarm"><svg width="16" height="15" viewBox="0 0 46 46"><path d="M23 2l22 42H1z" fill="#ffdc20" stroke="#a07a10" stroke-width="3"/><path d="M23 14v17" stroke="#222" stroke-width="5"/><circle cx="23" cy="38" r="3" fill="#222"/></svg>警报浏览器</span>
            <span class="level"><em></em>0</span>
            <span class="level"><em></em>0</span>
            <span class="level"><em></em>0</span>
            <svg class="grip" width="11" height="11"><path d="M8 0h2v2H8zM4 4h2v2H4zM8 4h2v2H8zM0 8h2v2H0zM4 8h2v2H4zM8 8h2v2H8z" fill="#5b80b5"/></svg>
        </footer>
    </div>
</body>
</html>
```
FILE: styles.css
```css
* {
    box-sizing: border-box;
}
body {
    margin: 0;
    font-family: "Noto Sans", "Noto Sans CJK SC", sans-serif;
    font-size: 15px;
    line-height: 20px;
    color: #000;
}
button {
    font: inherit;
    color: inherit;
    background: none;
    border: 0;
    padding: 0;
    margin: 0;
    white-space: nowrap;
}
svg {
    display: block;
    flex: none;
}
.defs {
    position: absolute;
}
.latin {
    font-size: 16px;
}
.app {
    display: flex;
    flex-direction: column;
    height: 100vh;
    padding: 0 1px;
    background: linear-gradient(#bfdbff 0, #bfdbff 200px, #a9c6ef 206px, #6590cf 870px);
}

/* title bar */
.titlebar {
    position: relative;
    display: flex;
    align-items: center;
    height: 40px;
    background: #fff;
    flex: none;
}
.orb {
    position: absolute;
    left: 8px;
    top: 16px;
    z-index: 2;
}
.quick {
    display: flex;
    align-items: center;
    justify-content: space-between;
    width: 175px;
    height: 31px;
    margin: 3px 0 0 57px;
    padding: 0 11px 0 12px;
    border: 1px solid #b5b9c0;
    border-radius: 0 16px 16px 30px;
    background: #f6f7f9;
}
.titlebar h1 {
    position: absolute;
    left: 0;
    right: 0;
    top: 13px;
    margin: 0;
    text-align: center;
    font-size: 15px;
    font-weight: normal;
    pointer-events: none;
}
.window-buttons {
    display: flex;
    margin: 0 1px 2px auto;
}
.window-buttons button {
    display: flex;
    justify-content: center;
    width: 58px;
}

/* ribbon */
.ribbon-tabs {
    display: flex;
    align-items: flex-end;
    height: 33px;
    padding-left: 67px;
    color: #15428b;
    flex: none;
}
.ribbon-tabs button {
    width: 59px;
    height: 31px;
}
.ribbon-tabs .active {
    width: 54px;
    margin-right: 2px;
    border: 1px solid #86aede;
    border-bottom: 0;
    border-radius: 4px 4px 0 0;
    background: linear-gradient(#f4f9ff, #dfeaf6);
}
.ribbon-tabs .help-menu {
    display: flex;
    align-items: center;
    gap: 4px;
    width: auto;
    height: 33px;
    margin-left: auto;
    margin-right: 3px;
}
.ribbon {
    display: flex;
    gap: 3px;
    height: 132px;
    margin: 0 1px 5px;
    padding: 2px 2px 2px;
    border: 1px solid #8db2e3;
    border-radius: 4px;
    background: linear-gradient(#dbe6f4 0, #dbe6f4 18px, #c9d9ee 24px, #e3f3ff 126px);
    box-shadow: 0 1px 1px #7f9fcc;
    flex: none;
}
.group {
    display: flex;
    flex-direction: column;
    border: 1px solid #a6c0dc;
    border-radius: 3px;
    background: linear-gradient(#dde8f5 0, #d6e2f2 18px, #c9d9ed 20px, #dae8f5 94px);
    color: #15428b;
    overflow: hidden;
    flex: none;
}
.first {
    width: 212px;
}
.settings {
    width: 511px;
}
.group-body {
    display: flex;
    height: 95px;
    padding-top: 4px;
}
.caption {
    flex: 1;
    padding-top: 4px;
    background: linear-gradient(#c1d6f0, #c2dbf2);
    color: #3e6aaa;
    text-align: center;
    white-space: nowrap;
}
.tool {
    display: flex;
    flex-direction: column;
    align-items: center;
    gap: 2px;
    height: 80px;
    flex: none;
}
.tool:disabled {
    color: #8d8d8d;
}
.sep {
    width: 2px;
    height: 88px;
    border-left: 1px solid #9abfea;
    background: #fff;
    flex: none;
}
.stack {
    display: flex;
    flex-direction: column;
    align-items: center;
    gap: 7px;
    flex: none;
}
.w24 { width: 24px; }
.w34 { width: 34px; }
.w38 { width: 38px; }
.w52 { width: 52px; }
.w60 { width: 60px; }
.w61 { width: 61px; }
.w71 { width: 71px; }
.w84 { width: 84px; }
.w86 { width: 86px; }
.w96 { width: 97px; }
.gauge {
    width: 108px;
}
.gauge .group-body {
    justify-content: center;
    padding-top: 13px;
}
.dial {
    font: 7px "Liberation Sans", sans-serif;
    fill: #444;
}
.dial-name {
    font: 9px "Liberation Sans", sans-serif;
    fill: #7397bb;
    text-anchor: middle;
}
.trend {
    width: 133px;
}
.trend .group-body,
.buffer .group-body {
    padding: 6px 3px 0;
    gap: 3px;
}
.buffer {
    width: 190px;
}
.buffer-map text {
    fill: #fff;
    text-anchor: middle;
}
.buffer .stack {
    margin-top: -2px;
}

/* node explorer */
main {
    display: flex;
    gap: 4px;
    flex: 1;
    min-height: 0;
    padding: 0 3px 4px;
}
.explorer {
    display: flex;
    flex-direction: column;
    width: 300px;
    background: #fff;
    overflow: hidden;
    flex: none;
}
.explorer h2 {
    margin: 0;
    padding: 4px 6px 5px;
    font-size: 15px;
    font-weight: normal;
    color: #15315f;
    background: linear-gradient(#add1ff, #c5deff);
}
.explorer-tools {
    display: flex;
    align-items: center;
    gap: 6px;
    height: 25px;
    padding-left: 7px;
    border-bottom: 1px solid #6f9dd9;
    background: linear-gradient(#e3efff, #afd2ff);
}
.tree ul {
    margin: 0;
    padding: 0 0 0 18px;
    list-style: none;
}
.tree > ul {
    padding-left: 8px;
}
.tree li {
    background: repeating-linear-gradient(#a8a08a 0, #a8a08a 1px, transparent 1px, transparent 2px) 4px 0 / 1px 100% no-repeat;
}
.tree li:last-child {
    background-size: 1px 12px;
}
.row {
    display: flex;
    align-items: center;
    height: 24px;
    white-space: nowrap;
}
.root {
    gap: 4px;
    padding-left: 4px;
}
.row > b {
    width: 9px;
    height: 1px;
    background: repeating-linear-gradient(90deg, #a8a08a 0, #a8a08a 1px, transparent 1px, transparent 2px) 4px 0 no-repeat;
    flex: none;
}
.row > i {
    width: 5px;
    height: 1px;
    background: repeating-linear-gradient(90deg, #a8a08a 0, #a8a08a 1px, transparent 1px, transparent 2px);
    flex: none;
}
.row a {
    display: flex;
    align-items: center;
    flex: 1;
    min-width: 0;
    height: 24px;
    gap: 5px;
    padding-left: 4px;
    color: #000;
    text-decoration: none;
}
.row .traffic {
    margin-left: -4px;
    fill: #9da2a0;
}
.row .on,
.row .sent {
    fill: #4c9144;
}
.row a span {
    flex: 1;
    min-width: 0;
    overflow: hidden;
}
.selected a {
    border: 1px solid #4f93cc;
    border-right: 0;
    padding-left: 3px;
    background: #99c4ea;
}

/* tabs */
.workspace {
    display: flex;
    flex-direction: column;
    flex: 1;
    min-width: 0;
}
.tabs {
    display: flex;
    align-items: flex-end;
    height: 25px;
    padding-left: 7px;
    background: #bfdbff;
    color: #15428b;
    flex: none;
}
.tab {
    height: 23px;
    padding: 0 5px;
    border: 1px solid #0a3f96;
    border-bottom: 0;
    border-radius: 4px 4px 0 0;
    background: linear-gradient(#eaf3ff, #bdd8fc);
    flex: none;
}
.tab.slant {
    display: flex;
    height: 24px;
    padding: 0;
    border: 0;
    background: none;
}
.slant span {
    display: flex;
    align-items: center;
    gap: 9px;
    height: 24px;
    padding: 0 5px 0 2px;
    border: 1px solid #0a3f96;
    border-width: 1px 1px 0 0;
    border-radius: 0 4px 0 0;
    background: linear-gradient(#eaf3ff, #bdd8fc);
}
.tab.active {
    font-weight: bold;
}
.active span {
    background: linear-gradient(#ffe2b8, #ffb862);
}
.over {
    margin-left: -17px;
    z-index: 1;
}
.panel-options {
    width: 20px;
    height: 20px;
    margin: 0 0 3px auto;
    padding: 1px;
    border: 1px solid #7f9dbd;
    border-radius: 3px;
    background: #dce9f7;
}
.tab-scroll {
    margin: 0 4px 9px auto;
}

/* lists */
.frame {
    display: grid;
    grid-template-rows: minmax(0, 122fr) 5px minmax(0, 100fr);
    flex: 1;
    min-height: 0;
    border: 1px solid #3b619c;
    outline: 1px solid #ffb865;
    outline-offset: -2px;
    padding: 1px;
}
.pane,
.inner {
    display: flex;
    flex-direction: column;
    min-width: 0;
    min-height: 0;
    background: #fff;
}
.inner {
    flex: 1;
    border: 1px solid #ffb865;
    border-bottom: 0;
}
.lower .tabs {
    height: 26px;
    border-bottom: 1px solid #3b619c;
}
.toolbar {
    display: flex;
    align-items: center;
    height: 29px;
    padding: 0 2px 0 7px;
    border-bottom: 1px solid #6f9dd9;
    background: linear-gradient(#e3efff, #afd2ff);
    flex: none;
}
.toolbar > button {
    margin-right: 6px;
}
.toolbar > i {
    width: 2px;
    height: 18px;
    margin-right: 4px;
    border-left: 1px solid #9ebfe8;
    background: #fff;
}
.toolbar .pressed {
    margin: 0 5px 0 -3px;
    padding: 2px 1px;
    border: 1px solid #ff9d2e;
    background: #ffbd69;
}
.toolbar .drop {
    display: flex;
    align-items: center;
    gap: 7px;
}
.combo {
    display: flex;
    width: 124px;
    height: 25px;
    margin: 0 3px 0 4px;
    border: 1px solid #abc7eb;
    background: #fff;
}
.combo.wide {
    width: 150px;
}
.combo input {
    flex: 1;
    min-width: 0;
    border: 0;
    padding: 0 4px;
    font: inherit;
    outline: 0;
}
.combo button {
    width: 14px;
    margin: 1px 0;
    padding-left: 3px;
    background: #cfe2fb;
}
.toolbar .push {
    margin-left: auto;
}
.count {
    display: flex;
    height: 25px;
    border: 1px solid #2b579a;
    background: #bfdbff;
    line-height: 23px;
    white-space: nowrap;
}
.count strong {
    padding: 0 9px;
    font-size: 16px;
}
.count span {
    width: 31px;
    border-left: 1px solid #2b579a;
    background: #fff;
    text-align: center;
}
.list {
    flex: 1;
    min-height: 0;
    overflow: hidden;
}
table {
    width: 100%;
    table-layout: fixed;
    border-collapse: separate;
    border-spacing: 0;
}
.c100 { width: 100px; }
.c125 { width: 125px; }
.c187 { width: 187px; }
.c200 { width: 200px; }
.c201 { width: 201px; }
th,
td {
    padding: 0 6px;
    text-align: left;
    font-weight: normal;
    white-space: nowrap;
    overflow: hidden;
}
th {
    height: 26px;
    padding-left: 7px;
    background: #d6e3f1;
    border-right: 1px solid #b5bccd;
    border-bottom: 1px solid #b5bccd;
}
td {
    height: 24px;
    background: #d7f1ff;
    border-right: 1px solid #4f9bd4;
    border-bottom: 1px solid #4f9bd4;
}
td svg {
    display: inline-block;
    vertical-align: -2px;
    margin-right: 4px;
}
td .flag {
    vertical-align: 1px;
    margin-right: 5px;
}
.num {
    text-align: right;
}
.site {
    color: #8f9422;
}
.https {
    color: #0a32ff;
}
.scroll {
    display: flex;
    height: 20px;
    background: #f0f0f0;
    flex: none;
}
.scroll button {
    display: flex;
    align-items: center;
    justify-content: center;
    width: 21px;
}
.track {
    flex: 1;
}
.thumb {
    height: 19px;
    background: #cdcdcd;
}
.lower .scroll {
    height: 22px;
    padding-bottom: 2px;
}
.splitter {
    border-top: 1px solid #555;
    border-bottom: 1px solid #555;
    background: #f0f0f0;
}

/* status bar */
footer {
    display: flex;
    align-items: center;
    height: 25px;
    padding: 0 0 2px 7px;
    background: linear-gradient(#dce9fb 0, #cfe1fa 9px, #b2d1fa 10px, #bfdbff 24px);
    border-top: 1px solid #3b619c;
    color: #15315f;
    font-size: 16px;
    flex: none;
    white-space: nowrap;
}
footer > span {
    display: flex;
    align-items: center;
    gap: 1px;
    height: 20px;
    margin-right: 7px;
}
footer > span[class^="w"] {
    border-right: 1px solid #8eadd6;
}
footer .w137 { width: 138px; }
footer .w84 { width: 77px; }
footer .w152 { width: 145px; }
footer .w82 { width: 75px; }
footer .w67 { width: 62px; margin-left: -2px; }
footer .w112 { width: 105px; }
footer .digits {
    font-size: 14px;
}
.drops {
    margin-left: 8px;
}
footer .fill {
    flex: 1;
    margin-left: -2px;
}
footer .alarm {
    padding-right: 7px;
    margin-right: 4px;
    border-right: 1px solid #8eadd6;
}
footer .level {
    width: 46px;
    gap: 6px;
    margin-right: 4px;
    font-size: 15px;
}
.level em {
    width: 12px;
    height: 12px;
    border: 1px solid #b27a18;
    border-radius: 50%;
    background: radial-gradient(circle at 4px 4px, #fff3b0, #f0a818);
}
.grip {
    align-self: flex-end;
    margin-left: 10px;
}
```
